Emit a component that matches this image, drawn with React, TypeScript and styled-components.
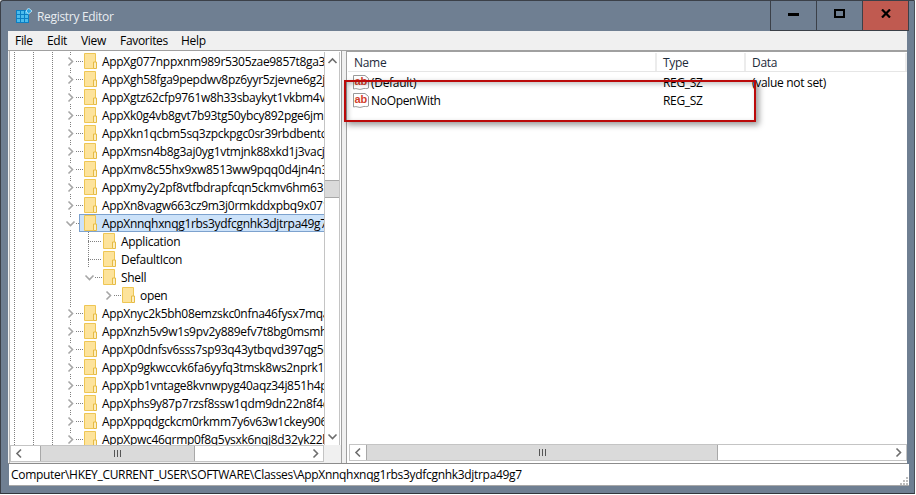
import React from "react"
import styled, { createGlobalStyle } from "styled-components"

const uiFont = `"Open Sans", "Noto Sans", "Liberation Sans", sans-serif`

const GlobalStyle = createGlobalStyle`
  html, body {
    margin: 0;
    padding: 0;
    background: #ffffff;
    overflow: hidden;
  }
  * {
    box-sizing: border-box;
  }
`

const Window = styled.div`
  width: 915px;
  height: 494px;
  display: flex;
  flex-direction: column;
  background: #6f7f92;
  border-left: 1px solid #3b4048;
  border-top: 1px solid #3b4048;
  border-bottom: 1px solid #33373d;
  border-right: 1px solid #4a5058;
  border-top-left-radius: 3px;
  font-family: ${uiFont};
  font-size: 12px;
  letter-spacing: -0.31px;
  color: #000;
  position: relative;
`
const TitleBar = styled.div`
  height: 30px;
  display: flex;
  align-items: center;
  padding-left: 15px;
  gap: 5px;
`
const Title = styled.span`
  color: #e9edf1;
  flex: 1;
`
const CaptionGroup = styled.div`
  display: flex;
  align-self: stretch;
  margin-right: 5px;
  border-bottom: 1px solid #3b4048;
  border-left: 1px solid #3b4048;
`
const CaptionButton = styled.div<{ $close?: boolean }>`
  width: 46px;
  display: flex;
  align-items: center;
  justify-content: center;
  padding-bottom: 4px;
  background: ${props => (props.$close ? "#c05a50" : "#6f7f92")};
  border-right: 1px solid #3b4048;
`
const MenuBar = styled.div`
  height: 20px;
  margin: 0 7px 0 7px;
  background: #f0f0f0;
  border-bottom: 1px solid #a0a0a0;
  display: flex;
  align-items: center;
`
const MenuItem = styled.span<{ $width: number }>`
  width: ${props => props.$width}px;
  padding-left: 7px;
`
const Panes = styled.div`
  height: 413px;
  margin: 0 7px 0 7px;
  padding-left: 1px;
  display: flex;
  background: #f0f0f0;
  border-bottom: 1px solid #8c8c8c;
`
const TreePane = styled.div`
  width: 332px;
  display: flex;
  flex-direction: column;
  border-left: 1px solid #b4b4b4;
`
const TreeTop = styled.div`
  height: 394px;
  display: flex;
  padding-top: 1px;
  background: #fff;
`
const TreeViewport = styled.div`
  width: 314px;
  overflow: hidden;
  background-image:
    linear-gradient(#808080 50%, transparent 50%),
    linear-gradient(#808080 50%, transparent 50%),
    linear-gradient(#808080 50%, transparent 50%),
    linear-gradient(#808080 50%, transparent 50%);
  background-size: 1px 2px;
  background-repeat: repeat-y;
  background-position: 4px 0, 23px 0, 42px 0, 60px 0;
`
const Row = styled.div<{ $level: number }>`
  height: 18px;
  display: flex;
  align-items: center;
  padding-left: ${props => 54 + props.$level * 19}px;
  white-space: nowrap;
`
const Chevron = styled.span`
  width: 12px;
  height: 12px;
  flex: none;
  display: flex;
  align-items: center;
  justify-content: center;
  background: #fff;
`
const Connector = styled.span`
  width: 7px;
  height: 1px;
  flex: none;
  background-image: linear-gradient(90deg, #808080 50%, transparent 50%);
  background-size: 2px 1px;
  background-position: 2px 0;
`
const LeafConnector = styled.span`
  width: 19px;
  height: 18px;
  flex: none;
  margin-left: 5px;
  margin-right: -5px;
  background-image:
    linear-gradient(#808080 50%, transparent 50%),
    linear-gradient(90deg, #808080 50%, transparent 50%);
  background-size: 1px 2px, 2px 1px;
  background-repeat: repeat-y, repeat-x;
  background-position: 0 0, 0 9px;
  background-color: #fff;
`
const Node = styled.div<{ $selected?: boolean }>`
  flex: 1;
  height: 18px;
  display: flex;
  align-items: center;
  gap: 5px;
  border: 1px solid ${props => (props.$selected ? "#7da2ce" : "transparent")};
  background: ${props => (props.$selected ? "#cce2f9" : "#fff")};
  margin-left: ${props => (props.$selected ? "-4px" : "0")};
  padding-left: ${props => (props.$selected ? "4px" : "0")};
`
const TreeBottom = styled.div`
  height: 17px;
  display: flex;
`
const Corner = styled.div`
  width: 17px;
  background: #f0f0f0;
`
const VScroll = styled.div`
  width: 16px;
  display: flex;
  flex-direction: column;
  background: #fff;
  border-left: 1px solid #c4c4c4;
  border-right: 1px solid #c4c4c4;
`
const HScroll = styled.div<{ $width: number }>`
  width: ${props => props.$width}px;
  height: 17px;
  display: flex;
  background: #fff;
  border: 1px solid #c4c4c4;
`
const ScrollButton = styled.div<{ $vertical?: boolean }>`
  width: ${props => (props.$vertical ? "100%" : "16px")};
  height: ${props => (props.$vertical ? "18px" : "100%")};
  flex: none;
  display: flex;
  align-items: center;
  justify-content: center;
  background: #fff;
`
const VThumb = styled.div`
  height: 18px;
  flex: none;
  margin-top: 110px;
  background: #dadada;
  border-top: 1px solid #a8a8a8;
  border-bottom: 1px solid #a8a8a8;
`
const Filler = styled.div`
  flex: 1;
`
const HThumb = styled.div<{ $offset: number; $width: number }>`
  width: ${props => props.$width}px;
  margin-left: ${props => props.$offset}px;
  flex: none;
  display: flex;
  align-items: center;
  justify-content: center;
  background: #dadada;
  border-left: 1px solid #a8a8a8;
  border-right: 1px solid #a8a8a8;
`
const Grip = styled.span`
  width: 7px;
  height: 7px;
  background-image: linear-gradient(90deg, #555 1px, transparent 1px);
  background-size: 3px 7px;
`
const Splitter = styled.div`
  width: 5px;
  flex: none;
  border-left: 1px solid #a0a0a0;
`
const ListPane = styled.div`
  width: 561px;
  display: flex;
  flex-direction: column;
  background: #fff;
  border-left: 1px solid #a0a0a0;
  border-top: 1px solid #a0a0a0;
  padding-left: 1px;
`
const HeaderRow = styled.div`
  height: 20px;
  padding-top: 1px;
  display: grid;
  grid-template-columns: 309px 89px 1fr;
  border-bottom: 1px solid #e6e6e6;
  color: #1c2a3a;
`
const HeaderCell = styled.div`
  padding-left: 6px;
  padding-top: 1px;
  line-height: 17px;
  border-right: 2px solid #ececec;
`
const ListBody = styled.div`
  flex: 1;
  padding-top: 1px;
`
const ListRow = styled.div`
  height: 18px;
  display: grid;
  grid-template-columns: 309px 89px 1fr;
  align-items: center;
  white-space: nowrap;
`
const NameCell = styled.div`
  display: flex;
  align-items: center;
  gap: 2px;
  padding-left: 5px;
`
const TextCell = styled.div`
  padding-left: 6px;
`
const ListScrollRow = styled.div`
  height: 19px;
  padding-bottom: 2px;
  padding-left: 1px;
  display: flex;
`
const StatusBar = styled.div`
  height: 22px;
  margin: 0 5px 0 8px;
  padding-left: 2px;
  display: flex;
  align-items: center;
  justify-content: space-between;
  background: #fff;
  border-bottom: 1px solid #a8a8a8;
  white-space: nowrap;
`
const ResizeGrip = styled.svg`
  align-self: flex-end;
  margin-right: 1px;
`
const Callout = styled.div`
  position: absolute;
  left: 343px;
  top: 79px;
  width: 412px;
  height: 42px;
  border: 2.5px solid #bb0a0a;
  box-shadow: 3px 3px 6px rgba(0, 0, 0, 0.4), inset 2px 2px 5px rgba(0, 0, 0, 0.25);
  pointer-events: none;
`

const treeAbove = [
  "AppXg077nppxnm989r5305zae9857t8ga3q",
  "AppXgh58fga9pepdwv8pz6yyr5zjevne6g2j",
  "AppXgtz62cfp9761w8h33sbaykyt1vkbm4v",
  "AppXk0g4vb8gvt7b93tg50ybcy892pge6jm",
  "AppXkn1qcbm5sq3zpckpgc0sr39rbdbentc",
  "AppXmsn4b8g3aj0yg1vtmjnk88xkd1j3vacj",
  "AppXmv8c55hx9xw8513ww9pqq0d4jn4n3c",
  "AppXmy2y2pf8vtfbdrapfcqn5ckmv6hm63",
  "AppXn8vagw663cz9m3j0rmkddxpbq9x071",
]
const treeBelow = [
  "AppXnyc2k5bh08emzskc0nfna46fysx7mqa",
  "AppXnzh5v9w1s9pv2y889efv7t8bg0msmh",
  "AppXp0dnfsv6sss7sp93q43ytbqvd397qg5p",
  "AppXp9gkwccvk6fa6yyfq3tmsk8ws2nprk1",
  "AppXpb1vntage8kvnwpyg40aqz34j851h4p",
  "AppXphs9y87p7rzsf8ssw1qdm9dn22n8f4c",
  "AppXppqdgckcm0rkmm7y6v63w1ckey906",
  "AppXpwc46qrmp0f8q5ysxk6nqj8d32yk22k",
]
const selectedKey = "AppXnnqhxnqg1rbs3ydfcgnhk3djtrpa49g7"

const ArrowIcon = ({ dir, color = "#6d6d6d" }: { dir: "up" | "down" | "left" | "right"; color?: string }) => {
  const points = {
    up: "1.5,7 5.5,3 9.5,7",
    down: "1.5,3.5 5.5,7.5 9.5,3.5",
    left: "7,1.5 3,5.5 7,9.5",
    right: "3.5,1.5 7.5,5.5 3.5,9.5",
  }[dir]
  return (
    <svg width="11" height="11" viewBox="0 0 11 11">
      <polyline points={points} fill="none" stroke={color} strokeWidth="1.6" />
    </svg>
  )
}

const TreeChevron = ({ open }: { open?: boolean }) => (
  <Chevron>
    <ArrowIcon dir={open ? "down" : "right"} color="#a6a6a6" />
  </Chevron>
)

const FolderIcon = () => (
  <svg width="13" height="16" viewBox="0 0 13 16" style={{ flex: "none" }}>
    <path d="M0.5 0.5H11.5V15.5H0.5Z" fill="#fde39b" stroke="#eec654" />
    <path d="M9.5 15V9H12.5V15.5H9.5" fill="#fdeec0" stroke="#e6bb44" />
  </svg>
)

const AppIcon = () => (
  <svg width="16" height="16" viewBox="0 0 16 16" style={{ flex: "none" }}>
    <path d="M0 2H13V15H0Z" fill="#0b7fc4" />
    <path
      d="M1 3H4V6H1ZM5 3H8V6H5ZM9 3H12V6H9ZM1 7H4V10H1ZM5 7H8V10H5ZM9 7H12V10H9ZM1 11H4V14H1ZM5 11H8V14H5ZM9 11H12V14H9Z"
      fill="#4cbcec"
    />
    <path d="M12.5 0L16 3L12.5 6L10 3Z" fill="#2aa3e0" stroke="#cdeefb" strokeWidth="0.8" />
  </svg>
)

const RegIcon = () => (
  <svg width="16" height="17" viewBox="0 0 16 17" style={{ flex: "none" }}>
    <path
      d="M0.5 1.5H12L15.5 4.5V14C13 15.5 12 13.5 9 15C6 16.5 4 13.5 0.5 15Z"
      fill="#fff"
      stroke="#9a9a9a"
    />
    <text
      x="1.5"
      y="10.5"
      fontFamily="'Liberation Sans', sans-serif"
      fontSize="11"
      fontWeight="700"
      letterSpacing="0"
      fill="#d2402c"
    >
      ab
    </text>
  </svg>
)

const TreeRow = ({ name }: { name: string }) => (
  <Row $level={0}>
    <TreeChevron />
    <Connector />
    <Node>
      <FolderIcon />
      {name}
    </Node>
  </Row>
)

const App = () => {
  return (
    <>
      <GlobalStyle />
      <Window>
        <TitleBar>
          <AppIcon />
          <Title>Registry Editor</Title>
          <CaptionGroup>
            <CaptionButton>
              <svg width="11" height="4" viewBox="0 0 11 4">
                <path d="M0 0H11V3H0Z" fill="#000" transform="translate(0 1)" />
              </svg>
            </CaptionButton>
            <CaptionButton>
              <svg width="11" height="9" viewBox="0 0 11 9">
                <path d="M1 1H10V8H1Z" fill="none" stroke="#000" strokeWidth="2" />
              </svg>
            </CaptionButton>
            <CaptionButton $close>
              <svg width="10" height="9" viewBox="0 0 10 9">
                <path d="M1 0.5L9 8.5M9 0.5L1 8.5" stroke="#000" strokeWidth="2.2" />
              </svg>
            </CaptionButton>
          </CaptionGroup>
        </TitleBar>
        <MenuBar>
          <MenuItem $width={32}>File</MenuItem>
          <MenuItem $width={34}>Edit</MenuItem>
          <MenuItem $width={39}>View</MenuItem>
          <MenuItem $width={61}>Favorites</MenuItem>
          <MenuItem $width={40}>Help</MenuItem>
        </MenuBar>
        <Panes>
          <TreePane>
            <TreeTop>
              <TreeViewport>
                {treeAbove.map(name => (
                  <TreeRow key={name} name={name} />
                ))}
                <Row $level={0}>
                  <TreeChevron open />
                  <Connector />
                  <Node $selected>
                    <FolderIcon />
                    {selectedKey}
                  </Node>
                </Row>
                <Row $level={1}>
                  <LeafConnector />
                  <Node>
                    <FolderIcon />
                    Application
                  </Node>
                </Row>
                <Row $level={1}>
                  <LeafConnector />
                  <Node>
                    <FolderIcon />
                    DefaultIcon
                  </Node>
                </Row>
                <Row $level={1}>
                  <TreeChevron open />
                  <Connector />
                  <Node>
                    <FolderIcon />
                    Shell
                  </Node>
                </Row>
                <Row $level={2}>
                  <TreeChevron />
                  <Connector />
                  <Node>
                    <FolderIcon />
                    open
                  </Node>
                </Row>
                {treeBelow.map(name => (
                  <TreeRow key={name} name={name} />
                ))}
              </TreeViewport>
              <VScroll>
                <ScrollButton $vertical>
                  <ArrowIcon dir="up" />
                </ScrollButton>
                <VThumb />
                <Filler />
                <ScrollButton $vertical>
                  <ArrowIcon dir="down" />
                </ScrollButton>
              </VScroll>
            </TreeTop>
            <TreeBottom>
              <HScroll $width={314}>
                <ScrollButton>
                  <ArrowIcon dir="left" />
                </ScrollButton>
                <HThumb $offset={13} $width={155}>
                  <Grip />
                </HThumb>
                <Filler />
                <ScrollButton>
                  <ArrowIcon dir="right" />
                </ScrollButton>
              </HScroll>
              <Corner />
            </TreeBottom>
          </TreePane>
          <Splitter />
          <ListPane>
            <HeaderRow>
              <HeaderCell>Name</HeaderCell>
              <HeaderCell>Type</HeaderCell>
              <HeaderCell>Data</HeaderCell>
            </HeaderRow>
            <ListBody>
              <ListRow>
                <NameCell>
                  <RegIcon />
                  (Default)
                </NameCell>
                <TextCell>REG_SZ</TextCell>
                <TextCell>(value not set)</TextCell>
              </ListRow>
              <ListRow>
                <NameCell>
                  <RegIcon />
                  NoOpenWith
                </NameCell>
                <TextCell>REG_SZ</TextCell>
                <TextCell />
              </ListRow>
            </ListBody>
            <ListScrollRow>
              <HScroll $width={558}>
                <ScrollButton>
                  <ArrowIcon dir="left" />
                </ScrollButton>
                <HThumb $offset={0} $width={352}>
                  <Grip />
                </HThumb>
                <Filler />
                <ScrollButton>
                  <ArrowIcon dir="right" />
                </ScrollButton>
              </HScroll>
            </ListScrollRow>
          </ListPane>
        </Panes>
        <StatusBar>
          {`Computer\\HKEY_CURRENT_USER\\SOFTWARE\\Classes\\${selectedKey}`}
          <ResizeGrip width="8" height="8" viewBox="0 0 8 8">
            <path
              d="M6 0h2v2H6zM3 3h2v2H3zM6 3h2v2H6zM0 6h2v2H0zM3 6h2v2H3zM6 6h2v2H6z"
              fill="#bdbdbd"
            />
          </ResizeGrip>
        </StatusBar>
        <Callout />
      </Window>
    </>
  )
}

export default App
